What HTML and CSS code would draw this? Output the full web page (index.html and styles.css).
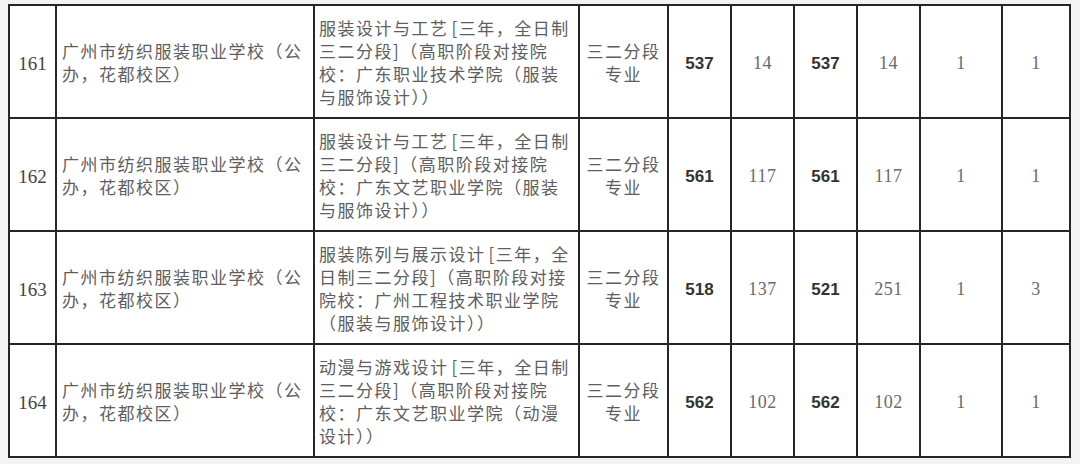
FILE: index.html
```html
<!DOCTYPE html>
<html lang="zh-CN">
<head>
<meta charset="utf-8">
<link rel="stylesheet" href="styles.css">
</head>
<body>
<div class="page">
<table class="grid">
<colgroup>
<col class="c-no"><col class="c-school"><col class="c-major"><col class="c-type">
<col class="c-n"><col class="c-n"><col class="c-n"><col class="c-n"><col class="c-k"><col class="c-l">
</colgroup>
<tbody>
<tr>
<td class="no">161</td>
<td class="school">广州市纺织服装职业学校（公<br>办，花都校区）</td>
<td class="major">服装设计与工艺<span class="sq">[</span>三年，全日制<br>三二分段]（高职阶段对接院<br>校：广东职业技术学院（服装<br>与服饰设计））</td>
<td class="type">三二分段<br>专业</td>
<td class="bold">537</td><td class="num">14</td><td class="bold">537</td><td class="num">14</td><td class="num">1</td><td class="num">1</td>
</tr>
<tr>
<td class="no">162</td>
<td class="school">广州市纺织服装职业学校（公<br>办，花都校区）</td>
<td class="major">服装设计与工艺<span class="sq">[</span>三年，全日制<br>三二分段]（高职阶段对接院<br>校：广东文艺职业学院（服装<br>与服饰设计））</td>
<td class="type">三二分段<br>专业</td>
<td class="bold">561</td><td class="num">117</td><td class="bold">561</td><td class="num">117</td><td class="num">1</td><td class="num">1</td>
</tr>
<tr>
<td class="no">163</td>
<td class="school">广州市纺织服装职业学校（公<br>办，花都校区）</td>
<td class="major">服装陈列与展示设计<span class="sq">[</span>三年，全<br>日制三二分段]（高职阶段对接<br>院校：广州工程技术职业学院<br>（服装与服饰设计））</td>
<td class="type">三二分段<br>专业</td>
<td class="bold">518</td><td class="num">137</td><td class="bold">521</td><td class="num">251</td><td class="num">1</td><td class="num">3</td>
</tr>
<tr>
<td class="no">164</td>
<td class="school">广州市纺织服装职业学校（公<br>办，花都校区）</td>
<td class="major">动漫与游戏设计<span class="sq">[</span>三年，全日制<br>三二分段]（高职阶段对接院<br>校：广东文艺职业学院（动漫<br>设计））</td>
<td class="type">三二分段<br>专业</td>
<td class="bold">562</td><td class="num">102</td><td class="bold">562</td><td class="num">102</td><td class="num">1</td><td class="num">1</td>
</tr>
</tbody>
</table>
</div>
</body>
</html>
```
FILE: styles.css
```css
html, body {
  margin: 0;
  padding: 0;
  background: #f3f3f3;
}
.page {
  padding: 4px 0 0 8px;
  width: 1080px;
  height: 464px;
  box-sizing: border-box;
  overflow: hidden;
}
.grid {
  border-collapse: collapse;
  table-layout: fixed;
  width: 1063px;
  background: #fff;
}
.c-no { width: 47px; }
.c-school { width: 258px; }
.c-major { width: 265px; }
.c-type { width: 89px; }
.c-n { width: 63px; }
.c-k { width: 82px; }
.c-l { width: 68px; }
.grid td {
  border: 2px solid #262626;
  height: 111px;
  padding: 0 3px 0 5px;
  vertical-align: middle;
  text-align: center;
  white-space: nowrap;
  overflow: hidden;
  font-family: "Noto Sans CJK SC", sans-serif;
  font-size: 17px;
  line-height: 23px;
  letter-spacing: 1.5px;
  color: #5e5e5e;
}
.grid td.no,
.grid td.bold,
.grid td.num {
  height: 107px;
  padding: 4px 0 0;
  letter-spacing: 0;
}
.grid td.no {
  font-family: "Liberation Serif", serif;
  font-size: 19px;
  color: #444;
}
.grid td.school,
.grid td.major {
  text-align: left;
}
.grid td.major {
  padding-left: 4px;
}
.sq {
  margin-left: 3px;
}
.grid td.type {
  padding: 0;
}
.grid td.bold {
  font-family: "Liberation Sans", sans-serif;
  font-weight: bold;
  font-size: 17px;
  color: #333;
}
.grid td.num {
  font-family: "Liberation Serif", serif;
  font-size: 18px;
  letter-spacing: 0.5px;
  color: #6a6a6a;
}
```
